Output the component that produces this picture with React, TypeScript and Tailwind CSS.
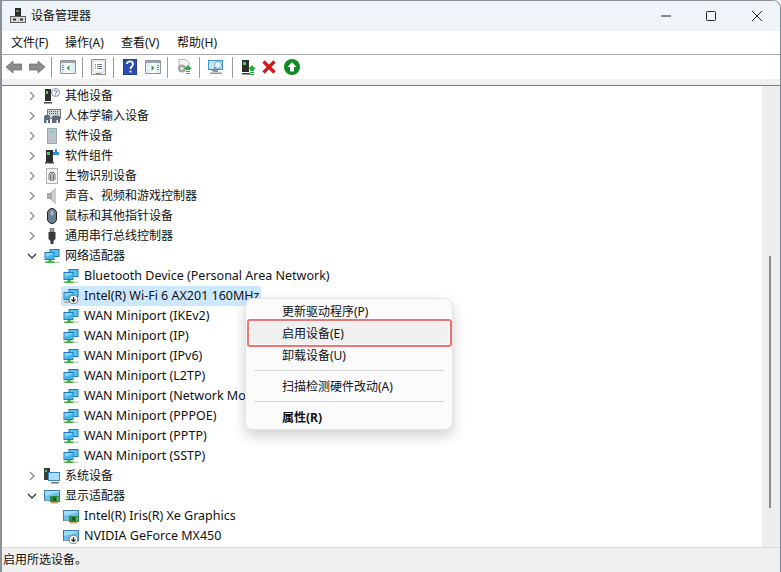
import type { ReactNode } from "react";

const FONT = "font-['Noto_Sans','Noto_Sans_CJK_SC',sans-serif]";

function Chevron({ open }: { open?: boolean }) {
  return (
    <svg width="10" height="10" viewBox="0 0 10 10" fill="none" className="shrink-0">
      {open ? (
        <path d="M1 3l4 4 4-4" stroke="#333" strokeWidth="1.3" />
      ) : (
        <path d="M3 1l4 4-4 4" stroke="#8a8a8a" strokeWidth="1.3" />
      )}
    </svg>
  );
}

function Disabled() {
  return (
    <g>
      <circle cx="10.500" cy="11.500" r="4.300" fill="#fff" stroke="#777" strokeWidth="1" />
      <path d="M10.500 9v4.500M8.500 11.300l2 2.200 2-2.200" stroke="#222" strokeWidth="1.200" fill="none" />
    </g>
  );
}

function NetIcon({ off }: { off?: boolean }) {
  return (
    <svg width="16" height="16" viewBox="0 0 16 16" className="shrink-0">
      <path d="M5.500 1h10v8h-10z" fill="#1e78c2" />
      <path d="M6.500 2h8v6h-8z" fill="#57c1ee" />
      <path d="M.500 4h10v8H.500z" fill="#1e78c2" />
      <path d="M1.500 5h8v6h-8z" fill="#7fd6f5" />
      <path d="M1.500 9l8-3v5h-8z" fill="#45b5e8" />
      <path d="M.500 13.500h15V15H.500z" fill={off ? "#c5c5c5" : "#c9d2c9"} />
      <path d="M4.500 12h3v1.500h3V15h-9v-1.500h3z" fill={off ? "#a9a9a9" : "#3fb03a"} />
      {off && <Disabled />}
    </svg>
  );
}

function DisplayIcon({ off }: { off?: boolean }) {
  return (
    <svg width="17" height="16" viewBox="0 0 17 16" className="shrink-0">
      <path d="M0 2h16v11H0z" fill="#3f7db0" />
      <path d="M1 3h14v9H1z" fill="#a0dcf4" />
      <path d="M1 8l14-4v8H1z" fill="#68c2ec" />
      <path d="M1 12h10v1H1z" fill="#8b9aa5" />
      {off ? (
        <Disabled />
      ) : (
        <g>
          <path d="M6 8h10v6H6z" fill="#2f8a45" />
          <path d="M9 9.500h3v3H9z" fill="#1c4d2a" />
          <path d="M13 9.500h2v1h-2zM13 11.500h2v1h-2z" fill="#8fd08f" />
          <path d="M7 14h7v1.500H7z" fill="#c9a94a" />
        </g>
      )}
    </svg>
  );
}

function TreeIcon({ kind }: { kind: string }) {
  if (kind === "other")
    return (
      <svg width="16" height="16" viewBox="0 0 16 16" className="shrink-0">
        <path d="M1 1h6v12H1z" fill="#2e2e2e" />
        <path d="M2 3h2v3H2z" fill="#47d36a" />
        <path d="M0 14h8v1.500H0z" fill="#444" />
        <circle cx="11.500" cy="4.500" r="4" fill="#fff" stroke="#7b95b5" />
        <path d="M10 3.500c.3-1.500 3-1.300 3 .2 0 1-1.500 1-1.500 2M11.500 6.500v1" stroke="#3a6ea5" fill="none" strokeWidth="1" />
      </svg>
    );
  if (kind === "input")
    return (
      <svg width="17" height="16" viewBox="0 0 17 16" className="shrink-0">
        <path d="M3.500 1.500h13v9h-13z" fill="#d2d6da" stroke="#777" />
        <path d="M5 3h1v1H5zM7 3h1v1H7zM9 3h1v1H9zM11 3h1v1h-1zM13 3h1v1h-1zM5 5h1v1H5zM7 5h1v1H7zM9 5h1v1H9zM11 5h1v1h-1zM13 5h1v1h-1z" fill="#555" />
        <path d="M0 9c0-3 6-3 6 0v6H4v-3H2.500v3H0z" fill="#5e6b7a" />
        <path d="M8 9c0-2 8-2 8 0v6h-2v-3h-1.500v3H8z" fill="#5e6b7a" />
      </svg>
    );
  if (kind === "soft")
    return (
      <svg width="16" height="16" viewBox="0 0 16 16" className="shrink-0">
        <path d="M3 0h10v16H3z" fill="#9ea8b0" />
        <path d="M4 1h8v14H4z" fill="#bcc4ca" />
        <path d="M7 3h2v2H7z" fill="#39d5e0" />
      </svg>
    );
  if (kind === "comp")
    return (
      <svg width="16" height="16" viewBox="0 0 16 16" className="shrink-0">
        <path d="M2 2h7v12H2z" fill="#2e2e2e" />
        <path d="M3 4h3v3H3z" fill="#47d36a" />
        <path d="M1 14h9v1.500H1z" fill="#444" />
        <path d="M9 4h2V1h2v3h2v3H9z" fill="#2f8fdc" />
      </svg>
    );
  if (kind === "bio")
    return (
      <svg width="16" height="16" viewBox="0 0 16 16" className="shrink-0">
        <path d="M2.500.5h11v15h-11z" fill="#f2f5f2" stroke="#a9b5ac" />
        <path d="M5 12V7a3 3 0 016 0v5M6.500 13V7a1.500 1.500 0 013 0v6M8 13V7" stroke="#555" fill="none" strokeWidth="0.8" />
      </svg>
    );
  if (kind === "sound")
    return (
      <svg width="16" height="16" viewBox="0 0 16 16" className="shrink-0">
        <path d="M3 5h3l6-5v16l-6-5H3z" fill="#a6aaad" />
        <path d="M8 4l4-3v14l-4-3z" fill="#c9cdcf" />
      </svg>
    );
  if (kind === "mouse")
    return (
      <svg width="16" height="16" viewBox="0 0 16 16" className="shrink-0">
        <rect x="3.500" y="0.500" width="9" height="15" rx="4.500" fill="#6d7f94" stroke="#222" />
        <rect x="6.500" y="2.500" width="3" height="5" rx="1.500" fill="#a5b3c1" />
      </svg>
    );
  if (kind === "usb")
    return (
      <svg width="16" height="16" viewBox="0 0 16 16" className="shrink-0">
        <path d="M6 0h4v4H6z" fill="#999" stroke="#555" strokeWidth="0.500" />
        <path d="M4.500 4h7v7l-2 2v3h-3v-3l-2-2z" fill="#3a3a3a" />
      </svg>
    );
  if (kind === "sys")
    return (
      <svg width="16" height="16" viewBox="0 0 16 16" className="shrink-0">
        <path d="M0 0h6v12H0z" fill="#3b3b3b" />
        <path d="M1 2h2v2H1z" fill="#47d36a" />
        <path d="M4 4h12v9H4z" fill="#3b86c2" />
        <path d="M5 5h10v7H5z" fill="#a6e1f7" />
        <path d="M7 14h8v1.500H7z" fill="#777" />
      </svg>
    );
  if (kind === "display") return <DisplayIcon />;
  return <NetIcon />;
}

function CatRow({ icon, label, open }: { icon: string; label: string; open?: boolean }) {
  return (
    <div className="flex h-5 items-center pl-[25px] text-[12px] text-[#111]">
      <Chevron open={open} />
      <span className="ml-[7px] flex w-[21px]">
        <TreeIcon kind={icon} />
      </span>
      <span className="whitespace-nowrap">{label}</span>
    </div>
  );
}

function LeafRow({ icon, label, selected }: { icon: ReactNode; label: string; selected?: boolean }) {
  return (
    <div className="flex h-5 items-center pl-[59px] text-[12.5px] text-[#111]">
      <div className={`flex h-5 items-center rounded-[2px] pl-[2px] pr-[2px] ${selected ? "bg-[#cce8ff]" : ""}`}>
        <span className="flex w-[21px]">{icon}</span>
        <span className="whitespace-nowrap">{label}</span>
      </div>
    </div>
  );
}

function ToolSep({ className = "" }: { className?: string }) {
  return <div className={`h-[21px] w-px bg-[#9b9b9b] ${className}`} />;
}

function Panel({ arrow, side }: { arrow: string; side: "l" | "r" }) {
  return (
    <svg width="16" height="14" viewBox="0 0 16 14">
      <path d="M.5.500h15v13H.5z" fill="#fff" stroke="#8a959e" />
      <path d="M1 1h14v2H1z" fill="#9aa5ae" />
      <path d="M1 3h4v10H1z" fill="#e4eef6" />
      <path d="M11 3h4v10h-4z" fill="#e4eef6" />
      <path d={side === "l" ? "M2 5h2v1H2zM2 7h2v1H2zM2 9h2v1H2z" : "M12 5h2v1h-2zM12 7h2v1h-2zM12 9h2v1h-2z"} fill="#6f8fa8" />
      <path d={arrow} fill="#2fa84a" />
    </svg>
  );
}

function Toolbar() {
  return (
    <div className="flex h-[24px] items-center bg-white pl-[4px]">
      <svg width="16" height="14" viewBox="0 0 16 14">
        <path d="M0 7l7-6v3h9v6H7v3z" fill="#8c8c8c" stroke="#666" strokeWidth="0.700" />
      </svg>
      <svg width="16" height="14" viewBox="0 0 16 14" className="ml-[7px]">
        <path d="M16 7L9 1v3H0v6h9v3z" fill="#8c8c8c" stroke="#666" strokeWidth="0.700" />
      </svg>
      <ToolSep className="ml-[6px]" />
      <span className="ml-[8px] flex">
        <Panel side="l" arrow="M9.500 5v6l-3-3z" />
      </span>
      <ToolSep className="ml-[6px]" />
      <svg width="15" height="16" viewBox="0 0 15 16" className="ml-[8px]">
        <path d="M.500.500h14v15H.500z" fill="#f3f3f3" stroke="#8f8f8f" />
        <path d="M2 2h11v11H2z" fill="#fff" stroke="#bbb" strokeWidth="0.500" />
        <path d="M4 5h1v1H4zM6 5h5v1H6zM4 7h1v1H4zM6 7h5v1H6zM4 9h1v1H4zM6 9h5v1H6z" fill="#6a7f99" />
        <path d="M5 14h5v1H5z" fill="#35a7e0" />
      </svg>
      <ToolSep className="ml-[7px]" />
      <svg width="14" height="16" viewBox="0 0 14 16" className="ml-[9px]">
        <path d="M0 0h14v16H0z" fill="#2c4cb0" />
        <path d="M0 0h14v16H0z" fill="none" stroke="#1c2f80" />
        <path d="M4 5c0-3.500 6-3.500 6 0 0 2.500-2.500 2.500-2.500 5M7.500 11.500v2" stroke="#fff" strokeWidth="1.800" fill="none" />
      </svg>
      <span className="ml-[8px] flex">
        <Panel side="r" arrow="M6.500 5l3 3-3 3z" />
      </span>
      <ToolSep className="ml-[6px]" />
      <svg width="16" height="16" viewBox="0 0 16 16" className="ml-[8px]">
        <path d="M3 .500h7l3 3V9H3z" fill="#f5f5f5" stroke="#b5b5b5" />
        <circle cx="6" cy="9.500" r="4" fill="#a5a5a5" />
        <circle cx="6" cy="9.500" r="1.500" fill="#eee" />
        <path d="M12 6l4 4h-2v1h-4v-1H8z" fill="#2dac3f" />
        <path d="M10 12h4v1h-4zM10 14h4v1h-4z" fill="#2dac3f" />
      </svg>
      <ToolSep className="ml-[7px]" />
      <svg width="17" height="16" viewBox="0 0 17 16" className="ml-[8px]">
        <path d="M0 1h15v10H0z" fill="#3f93d1" />
        <path d="M1 2h13v8H1z" fill="#bfe6f8" />
        <path d="M5 11h5v2H5zM2 13.500h12V15H2z" fill="#8b97a1" />
        <circle cx="10" cy="6" r="3.500" fill="#e8f6fd" stroke="#7aa2bd" />
        <path d="M7.500 8.500L4 12" stroke="#7a8288" strokeWidth="1.500" />
      </svg>
      <ToolSep className="ml-[7px]" />
      <svg width="14" height="16" viewBox="0 0 14 16" className="ml-[9px]">
        <path d="M0 1h7v12H0z" fill="#2b2b2b" />
        <path d="M1 3h3v3H1z" fill="#47d36a" />
        <path d="M0 14h8v1.500H0z" fill="#3a3a3a" />
        <path d="M10 6l4 4h-2v2H8v-2H6z" fill="#2dac3f" />
        <path d="M8 13h4v1H8zM8 15h4v1H8z" fill="#2dac3f" />
      </svg>
      <svg width="14" height="14" viewBox="0 0 14 14" className="ml-[6px]">
        <path d="M1.500 1.500l11 11M12.500 1.500l-11 11" stroke="#d3161c" strokeWidth="3.200" />
      </svg>
      <svg width="16" height="16" viewBox="0 0 16 16" className="ml-[8px]">
        <circle cx="8" cy="8" r="8" fill="#0d8a22" />
        <path d="M8 3l4.500 5H10v4.500H6V8H3.500z" fill="#fff" />
      </svg>
    </div>
  );
}

const CATS_TOP = [
  ["other", "其他设备"],
  ["input", "人体学输入设备"],
  ["soft", "软件设备"],
  ["comp", "软件组件"],
  ["bio", "生物识别设备"],
  ["sound", "声音、视频和游戏控制器"],
  ["mouse", "鼠标和其他指针设备"],
  ["usb", "通用串行总线控制器"],
];

const WAN = [
  "WAN Miniport (IKEv2)",
  "WAN Miniport (IP)",
  "WAN Miniport (IPv6)",
  "WAN Miniport (L2TP)",
  "WAN Miniport (Network Monitor)",
  "WAN Miniport (PPPOE)",
  "WAN Miniport (PPTP)",
  "WAN Miniport (SSTP)",
];

function ContextMenu() {
  return (
    <div className="absolute left-[243px] top-[297px] w-[208px] rounded-[8px] border border-[#e3e3e3] bg-[#fbfbfb] px-[4px] py-[1px] text-[12px] text-[#111] shadow-[0_6px_14px_rgba(0,0,0,0.18)]">
      <div className="flex h-[22px] items-center pl-[32px] pt-px">更新驱动程序(P)</div>
      <div className="relative flex h-[22px] items-center rounded-[4px] bg-[#f0f0f0] pl-[32px] pt-px">
        启用设备(E)
        <div className="absolute inset-y-[-3px] left-[-3px] right-[-4px] rounded-[3px] border-2 border-[#ee7374]" />
      </div>
      <div className="flex h-[22px] items-center pl-[32px] pt-px">卸载设备(U)</div>
      <div className="mx-[4px] my-[4px] h-px bg-[#d4d4d4]" />
      <div className="flex h-[22px] items-center pl-[32px] pt-px">扫描检测硬件改动(A)</div>
      <div className="mx-[4px] my-[4px] h-px bg-[#d4d4d4]" />
      <div className="flex h-[22px] items-center pl-[32px] pt-px font-bold">属性(R)</div>
    </div>
  );
}

export default function App() {
  return (
    <div className={`relative flex h-[572px] w-[781px] flex-col overflow-hidden rounded-tr-[8px] border-l-2 border-r border-t border-[#8b9196] border-r-[#7c8a94] bg-white ${FONT}`}>
      {/* title bar */}
      <div className="flex h-[30px] shrink-0 items-center bg-[#eff4f8] pl-[8px]">
        <svg width="16" height="16" viewBox="0 0 16 16">
          <path d="M5 0h6v8H5z" fill="#2b2b2b" />
          <path d="M6.500 2h2v2h-2z" fill="#47d36a" />
          <path d="M0 8h16v7H0z" fill="#5c5c5c" />
          <path d="M1 9h14v5H1z" fill="#d8d8d8" />
          <path d="M3 10.500h3v2H3zM10 10.500h3v2h-3z" fill="#333" />
        </svg>
        <span className="ml-[5px] text-[12px] text-[#111]">设备管理器</span>
        <div className="ml-auto flex items-center pr-[18px]">
          <svg width="10" height="10" viewBox="0 0 10 10">
            <path d="M0 5h10" stroke="#222" />
          </svg>
          <svg width="10" height="10" viewBox="0 0 10 10" className="ml-[35px]">
            <rect x="0.500" y="0.500" width="9" height="9" rx="1" fill="none" stroke="#222" />
          </svg>
          <svg width="10" height="10" viewBox="0 0 10 10" className="ml-[36px]">
            <path d="M0 0l10 10M10 0L0 10" stroke="#222" />
          </svg>
        </div>
      </div>

      {/* menu */}
      <div className="flex h-[24px] shrink-0 items-center border-b border-[#a9a9a9] bg-white pl-[9px] text-[12px] text-[#111]">
        <span className="w-[54px]">文件(F)</span>
        <span className="w-[56px]">操作(A)</span>
        <span className="w-[56px]">查看(V)</span>
        <span>帮助(H)</span>
      </div>

      <Toolbar />
      <div className="h-[6px] shrink-0 bg-[#f0f0f0]" />

      {/* tree + scrollbar */}
      <div className="flex min-h-0 flex-1 border-t-[1.5px] border-[#7d7d7d] bg-white">
        <div className="min-w-0 flex-1 overflow-hidden">
          {CATS_TOP.map(([icon, label]) => (
            <CatRow key={label} icon={icon} label={label} />
          ))}
          <CatRow icon="net" label="网络适配器" open />
          <LeafRow icon={<NetIcon />} label="Bluetooth Device (Personal Area Network)" />
          <LeafRow icon={<NetIcon off />} label="Intel(R) Wi-Fi 6 AX201 160MHz" selected />
          {WAN.map((w) => (
            <LeafRow key={w} icon={<NetIcon />} label={w} />
          ))}
          <CatRow icon="sys" label="系统设备" />
          <CatRow icon="display" label="显示适配器" open />
          <LeafRow icon={<DisplayIcon />} label="Intel(R) Iris(R) Xe Graphics" />
          <LeafRow icon={<DisplayIcon off />} label="NVIDIA GeForce MX450" />
        </div>
        <div className="flex w-[18px] shrink-0 flex-col bg-[#eeeeee] pl-[7px] pt-[170px]">
          <div className="h-[252px] w-[2px] bg-[#8a8a8a]" />
        </div>
      </div>

      {/* status bar */}
      <div className="flex h-[25px] shrink-0 items-center border-t border-[#d9d9d9] bg-[#f0f0f0] pl-[1px] text-[12px] text-[#111]">
        启用所选设备。
      </div>

      <ContextMenu />
    </div>
  );
}
